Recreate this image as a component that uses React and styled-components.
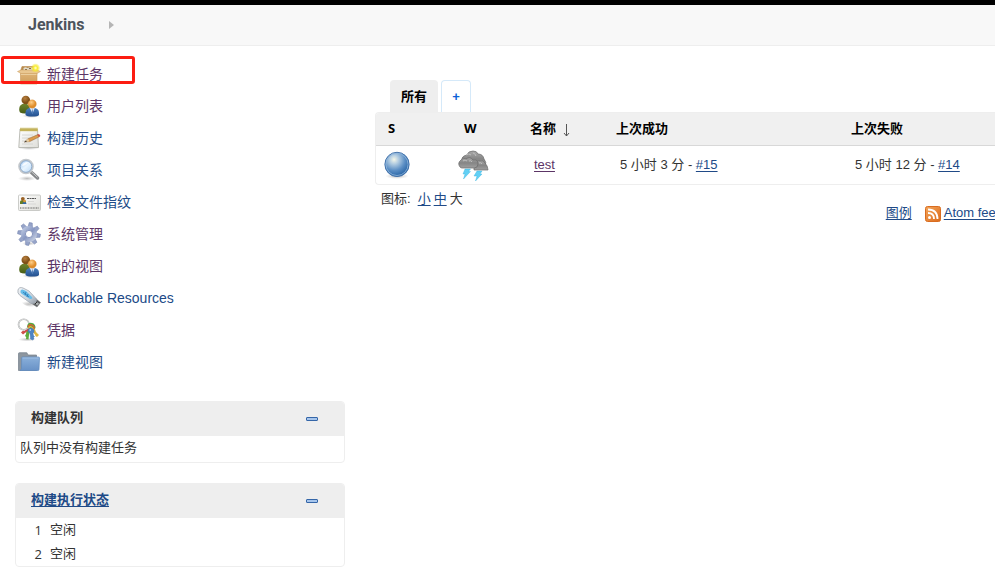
import React from "react";
import styled, { createGlobalStyle } from "styled-components";

const GlobalStyle = createGlobalStyle`
  *, *::before, *::after { box-sizing: border-box; }
  body {
    margin: 0;
    background: #fff;
    color: #333;
    font: 13px/20px "Liberation Sans", "Noto Sans CJK SC", sans-serif;
    overflow: hidden;
  }
`;

const TopBar = styled.header`
  display: flex;
  align-items: center;
  gap: 24px;
  height: 46px;
  padding: 0 28px;
  background: #f8f8f8;
  border-top: 5px solid #000;
  border-bottom: 1px solid #eee;
`;

const Brand = styled.a`
  color: #4d545d;
  font: 700 16px/20px Roboto, sans-serif;
  text-decoration: none;
`;

const Page = styled.div`
  display: grid;
  grid-template-columns: 330px minmax(630px, 1fr);
  column-gap: 30px;
  padding: 12px 0 0 15px;
`;

const TaskList = styled.ul`
  list-style: none;
  margin: 0;
  padding: 0;
`;

const Task = styled.li`
  position: relative;
  height: 32px;
  padding-left: 2px;
`;

const TaskLink = styled.a`
  display: flex;
  align-items: center;
  gap: 6px;
  height: 32px;
  width: max-content;
  color: ${(p) => (p.$visited ? "#5c3566" : "#204a87")};
  font-size: 14px;
  text-decoration: none;
`;

const Highlight = styled.span`
  position: absolute;
  top: -2px;
  left: -14px;
  width: 134px;
  height: 28px;
  border: 3px solid #fc1d12;
  border-radius: 3px;
  pointer-events: none;
`;

const Pane = styled.section`
  margin-top: ${(p) => (p.$first ? "23px" : "20px")};
  border: 1px solid #eee;
  border-radius: 4px;
  overflow: hidden;
`;

const PaneHead = styled.div`
  display: flex;
  align-items: center;
  justify-content: space-between;
  height: 34px;
  padding: 0 26px 2px 15px;
  background: #eee;
`;

const PaneTitle = styled.h2`
  margin: 0;
  font-size: 13px;
  line-height: 20px;
`;

const Link = styled.a`
  color: ${(p) => (p.$visited ? "#5c3566" : "#204a87")};
  text-underline-offset: 2px;
`;

const Collapse = styled.button`
  display: flex;
  width: 12px;
  height: 12px;
  padding: 0;
  border: 0;
  background: none;
  cursor: pointer;
`;

const PaneText = styled.p`
  margin: 0;
  padding: 2px 4px 4px;
`;

const ExecutorTable = styled.table`
  width: 100%;
  border-collapse: collapse;

  td { height: 24px; padding: 0; }
  td:first-child {
    width: 34px;
    padding-right: 8px;
    text-align: right;
    font-family: "Open Sans", sans-serif;
  }
`;

const Main = styled.main`
  padding-top: 22px;
`;

const Tabs = styled.nav`
  display: flex;
  gap: 3px;
  height: 32px;
  padding-left: 15px;
`;

const Tab = styled.a`
  display: flex;
  align-items: center;
  justify-content: center;
  min-width: ${(p) => (p.$active ? "48px" : "30px")};
  border: 1px solid ${(p) => (p.$active ? "#eee" : "#d5e9f9")};
  border-bottom: 0;
  border-radius: 4px 4px 0 0;
  background: ${(p) => (p.$active ? "#eee" : "#fff")};
  color: ${(p) => (p.$active ? "#000" : "#0b61d6")};
  font-weight: 700;
  text-decoration: none;
`;

const JobFrame = styled.div`
  border: 1px solid #eee;
  border-right: 0;
  border-radius: 4px 0 0 4px;
  overflow: hidden;
`;

const JobTable = styled.table`
  width: 100%;
  table-layout: fixed;
  border-collapse: collapse;

  th {
    height: 32px;
    padding: 0;
    background: #f0f0f0;
    border-bottom: 1px solid #d8d8d8;
    color: #000;
    text-align: left;
    white-space: nowrap;
  }
  th:first-child { padding-left: 12px; }
  td { height: 39px; padding: 0 0 0 4px; }
  td:first-child { padding-left: 7px; }
  td svg { display: block; }
  th:nth-child(2) { padding-left: 12px; }
  td:nth-child(2) { padding-left: 5px; }
`;

const Letter = styled.span`
  font: 700 13px/20px "Open Sans", sans-serif;
`;

const Col = styled.col`
  width: ${(p) => p.$w}px;
`;

const SortArrow = styled.svg`
  margin-left: 6px;
  vertical-align: -4px;
`;

const SizeRow = styled.div`
  display: flex;
  gap: 3px;
  padding: 4px 0 0 6px;
`;

const SizeLabel = styled.span`
  margin-right: 4px;
`;

const FeedRow = styled.div`
  display: flex;
  justify-content: flex-end;
  align-items: center;
  padding-right: 2px;
  margin-top: -6px;
  white-space: nowrap;
`;

const FeedLink = styled(Link)`
  margin-left: 3px;
`;

const FeedIcon = styled.svg`
  margin-left: 13px;
  margin-top: 2px;
`;

const Definitions = styled.svg`
  display: block;
`;

const Icon = ({ children, size = 24 }) => (
  <svg width={size} height={size} viewBox="0 0 24 24" aria-hidden="true">{children}</svg>
);

const Gradients = () => (
  <Definitions width="0" height="0" aria-hidden="true">
    <defs>
      <linearGradient id="card" x2="0" y2="1"><stop stopColor="#e0b579" /><stop offset="1" stopColor="#cd9d5b" /></linearGradient>
      <radialGradient id="glow"><stop stopColor="#fffde0" /><stop offset=".45" stopColor="#f9ee35" /><stop offset="1" stopColor="#f5e52a" stopOpacity=".15" /></radialGradient>
      <radialGradient id="brownHead" cx=".4" cy=".3"><stop stopColor="#b9803f" /><stop offset="1" stopColor="#805018" /></radialGradient>
      <radialGradient id="goldHead" cx=".4" cy=".3"><stop stopColor="#ffd08a" /><stop offset="1" stopColor="#e08e2c" /></radialGradient>
      <linearGradient id="blueBody" x2="0" y2="1"><stop stopColor="#4d82c0" /><stop offset="1" stopColor="#234f8e" /></linearGradient>
      <linearGradient id="greenBody" x2="0" y2="1"><stop stopColor="#70852f" /><stop offset="1" stopColor="#475d16" /></linearGradient>
      <linearGradient id="paper" x2="1" y2="1"><stop stopColor="#fff" /><stop offset="1" stopColor="#deded9" /></linearGradient>
      <linearGradient id="lens" x2="1" y2="1"><stop stopColor="#9cc7f5" /><stop offset=".5" stopColor="#e9f5ff" /><stop offset="1" stopColor="#b0d3f5" /></linearGradient>
      <linearGradient id="steel" x2="1" y2="1"><stop stopColor="#b9c5df" /><stop offset=".5" stopColor="#8797c2" /><stop offset="1" stopColor="#c5cee1" /></linearGradient>
      <linearGradient id="folder" x2="0" y2="1"><stop stopColor="#8bb0da" /><stop offset="1" stopColor="#6892c7" /></linearGradient>
      <linearGradient id="usb" x2="1" y2="1"><stop stopColor="#f5f7f9" /><stop offset=".6" stopColor="#cbd3dc" /><stop offset="1" stopColor="#949ca6" /></linearGradient>
      <radialGradient id="ball" cx=".38" cy=".3" r=".72"><stop stopColor="#f5f7e8" /><stop offset=".25" stopColor="#b5cee2" /><stop offset=".62" stopColor="#5c8fc5" /><stop offset="1" stopColor="#2461a3" /></radialGradient>
      <radialGradient id="shade"><stop stopColor="#777" stopOpacity=".5" /><stop offset="1" stopColor="#999" stopOpacity="0" /></radialGradient>
      <linearGradient id="cloud" x2="0" y2="1"><stop stopColor="#a9a9a9" /><stop offset=".5" stopColor="#858585" /><stop offset="1" stopColor="#a0a0a0" /></linearGradient>
      <linearGradient id="feed" x2="1" y2="1"><stop stopColor="#f3a65c" /><stop offset="1" stopColor="#dc6b1b" /></linearGradient>
    </defs>
  </Definitions>
);

const BoxIcon = () => (
  <Icon>
    <path d="M5 4.500h14L20 9H3.500z" fill="#b78a4d" stroke="#bd8b4d" strokeWidth=".6" />
    <path d="M6.500 6q2-1.500 4 0 3-1.500 6 0v3h-10z" fill="#e1dccb" />
    <path d="M8 7.500h2m2-1h2" stroke="#866a43" />
    <path d="M3.500 10h16.500v12H3.500z" fill="url(#card)" stroke="#c89755" strokeWidth=".6" />
    <path d="M.5 9.500L4 8h16l3.500 1.500L20 11.500H4z" fill="#e9c791" stroke="#ca9c60" strokeWidth=".5" />
    <path d="M4 12.500h15.500" stroke="#efd5a8" strokeWidth=".8" />
    <circle cx="18.500" cy="6" r="4.500" fill="url(#glow)" />
  </Icon>
);

const PeopleIcon = () => (
  <Icon>
    <ellipse cx="14" cy="22" rx="9" ry="2" fill="url(#shade)" />
    <path d="M2.200 15q0-5 5.500-5.500 5.300.5 5.300 6v3q-6 2-10 0-.8-.5-.8-3.500" fill="url(#greenBody)" />
    <circle cx="8.800" cy="6" r="4.300" fill="url(#brownHead)" />
    <path d="M8.500 18.500q0-4.500 6.500-5 7 .5 7 5v2.500q-1 1.500-6.500 1.500T8.500 21z" fill="url(#blueBody)" />
    <path d="M12.500 13.500l3 6 2.500-6z" fill="#dce8f7" />
    <path d="M15.200 14.500l-.6 4 .8 2 .8-2z" fill="#4d78b2" />
    <circle cx="15.200" cy="10" r="4.200" fill="url(#goldHead)" stroke="#d68b35" strokeWidth=".3" />
  </Icon>
);

const NotepadIcon = () => (
  <Icon>
    <ellipse cx="12" cy="22" rx="11" ry="2" fill="url(#shade)" />
    <path d="M3 3h17.500l1 18.500H1.800z" fill="url(#paper)" stroke="#acada6" strokeWidth=".8" />
    <path d="M3 2.500h17.500v2.500H3z" fill="#b6a34d" />
    <path d="M4 1.500v4m2-4v4m2-4v4m2-4v4m2-4v4m2-4v4m2-4v4m2-4v4m2-4v4" stroke="#d5c56a" strokeWidth=".9" />
    <path d="M5 9h11M5 12h8M5 15h3M5 18h11" stroke="#d0d0cc" strokeWidth=".8" />
    <path d="M7.500 16l3.500-3.200L21 8.500l1.500 2.200-10 5z" fill="#dc9b4c" stroke="#8e653a" strokeWidth=".5" />
    <path d="M7.500 16l3.500-3.200 1.500 2.800z" fill="#e5cfa6" /><path d="M7.200 16.200l1.800-1.700.8 1.200z" fill="#333" />
    <path d="M20.300 8.800l1.700-.8 1.500 2-1.700 1z" fill="#cc5148" />
  </Icon>
);

const SearchIcon = () => (
  <Icon>
    <ellipse cx="10" cy="20.500" rx="9" ry="2.500" fill="url(#shade)" />
    <path d="M14.500 14.500l6 5.500" stroke="#858789" strokeWidth="3.500" strokeLinecap="round" />
    <path d="M14.500 13.800l6 5.500" stroke="#c7c8c8" strokeWidth="1" />
    <circle cx="9" cy="8.500" r="6.800" fill="url(#lens)" stroke="#c4c8cc" strokeWidth="2" />
    <circle cx="9" cy="8.500" r="5.800" fill="none" stroke="#7499c4" strokeWidth=".7" />
    <path d="M5 8q1-4 6-4-1 3-6 4" fill="#fff" opacity=".8" />
  </Icon>
);

const BadgeIcon = () => (
  <Icon>
    <rect x="1.500" y="5" width="22" height="15.500" rx="1" fill="url(#paper)" stroke="#bfc0bc" strokeWidth=".8" />
    <path d="M3 12q0-2 3-2 3 0 3 2v2H3z" fill="#657e23" /><circle cx="5.800" cy="8.800" r="1.900" fill="#9a6226" />
    <path d="M5.500 14q0-2 2-2t2 2z" fill="#3269ac" /><circle cx="7.500" cy="11" r="1.300" fill="#dc9436" />
    <path d="M10 8.500h9" stroke="#555" strokeDasharray="2 .5" />
    <path d="M11 11.500h6M11 14h8" stroke="#d2d2d0" strokeWidth=".8" />
    <path d="M3 18h19" stroke="#8d8d8b" strokeWidth="1.500" strokeDasharray="1 .6" />
  </Icon>
);

const teeth = [0, 45, 90, 135, 180, 225, 270, 315];

const GearIcon = () => (
  <Icon>
    <ellipse cx="12" cy="21.500" rx="7" ry="2" fill="url(#shade)" />
    {teeth.map((angle) => (
      <path key={angle} d="M9.800 5L10.300.700h3L14.200 5z" transform={`rotate(${angle + 10} 12 12)`} fill="#96a4c9" stroke="#7988b2" strokeWidth=".6" />
    ))}
    <circle cx="12" cy="12" r="5.800" fill="none" stroke="url(#steel)" strokeWidth="4.500" />
    <circle cx="12" cy="12" r="3.600" fill="#fff" stroke="#6e7fae" strokeWidth=".8" />
  </Icon>
);

const UsbIcon = () => (
  <Icon>
    <path d="M3 15q9 9 18 5l-7-5z" fill="url(#shade)" />
    <path d="M14 17l4-5 5.500 4.500-3.500 4.500z" fill="#595c60" stroke="#777" strokeWidth=".5" />
    <path d="M17.500 14.500l4.500 3-1.500 2-4.500-3z" fill="#aaaead" /><path d="M19 16l1 .8m-2 .4l1 .8" stroke="#222" />
    <path d="M1 4Q2 .500 6 2l6 3 7.500 8q.5 3-3 4.500h-2.500L3 9.500Q0 7 1 4z" fill="url(#usb)" stroke="#a2aab3" strokeWidth=".8" />
    <path d="M3.500 5Q4 2 9 5l6 6q1 2-2 2L5 8q-2-1-1.500-3z" fill="#66bdea" />
    <path d="M6 6l6 5m-3-5l-1 3m3-1l-1 3" stroke="#276eab" strokeWidth=".7" />
  </Icon>
);

const KeysIcon = () => (
  <Icon>
    <ellipse cx="10" cy="21.500" rx="9" ry="2" fill="url(#shade)" />
    <path d="M9.500 12q2-2 4 0l-1.500 5-.5 4.500-2.500-.5.200-2-1.200-1 1-2z" fill="#5dab3c" />
    <path d="M10.500 9l2 2.500-6.500 5-2-2 2-2 1.500.5z" fill="#cf4e49" />
    <path d="M17 9l2 5 3 3-2 2-1.500-1-.5-1.500-4-4z" fill="#e0b744" />
    <circle cx="6.800" cy="6.500" r="5.300" fill="none" stroke="#acaeae" strokeWidth="1.600" />
    <circle cx="6.800" cy="6.500" r="5.300" fill="none" stroke="#f1f1f1" strokeWidth=".6" />
    <path d="M10 9q.5-5 5-4 3.500.8 3.500 5l-3 3z" fill="#52aa43" />
    <path d="M11 9q1-3 4-2 2.500 1 2 4" stroke="#e5582f" strokeWidth="1.300" fill="none" />
    <path d="M11.500 10.500q1-2.500 3-1.500 2 1 1.500 3" stroke="#f0b736" strokeWidth="1.200" fill="none" />
    <path d="M11.500 11q3-2.500 5.500 1 .5 3-1 3.500l.5 2 1 1-1 1 .5 1.500-1.500 1-2-1-.5-5.500q-3-2-1.500-4.500z" fill="#4e84c4" stroke="#396fae" strokeWidth=".4" />
    <circle cx="13.200" cy="12" r=".8" fill="#e8f2ff" />
  </Icon>
);

const FolderIcon = () => (
  <Icon>
    <path d="M1.500 3.500q0-.8 1-.8h7q.8 0 .8.800L11 5h8.500v15.500h-18z" fill="#8d969f" stroke="#737e89" strokeWidth=".7" />
    <path d="M5.500 7h16q1 0 1 1l-.5 11.500q0 1-1 1H3q1.300-.5 1.500-2L4.700 8q0-1 .8-1z" fill="url(#folder)" stroke="#5e8bc0" strokeWidth=".7" />
    <path d="M5.500 8h16" stroke="#b0cce9" strokeWidth=".6" />
  </Icon>
);

const BallIcon = () => (
  <Icon size={28}>
    <ellipse cx="12" cy="21.500" rx="10" ry="2.500" fill="url(#shade)" />
    <circle cx="12" cy="11.500" r="10.400" fill="url(#ball)" stroke="#3d6ea8" strokeWidth=".8" />
    <circle cx="12" cy="11.500" r="9.500" fill="none" stroke="#91b7dc" strokeWidth=".7" />
  </Icon>
);

const StormIcon = () => (
  <svg width="32" height="32" viewBox="0 0 32 32" role="img" aria-label="雷雨">
    <g fill="url(#cloud)" stroke="#6a6a6a" strokeWidth=".7">
      <path d="M5 12q-1-5 5-6 1-4 6-4 4 0 5 3 5 0 6 5 3 3 1 8H7z" />
      <path d="M17 20q-1-3 1-5 1-4 5-3 3-1 5 2 3 3 3 7H17z" />
      <path d="M3 18q-3-4 1-7 2-3 5-1 4-3 7 1 5-1 5 4 0 4-4 4H5q-1 0-2-1z" />
    </g>
    <path d="M9 6q3-2 5 0M16 4q2 0 3 3M6 12q2-2 4 0M12 12q2-1 3 1M22 14q2-1 3 1" fill="none" stroke="#bdbdbd" />
    <path d="M8 20h5.500l-2 2.500h2L6.500 30 8 25H6zM20 22h5l-2 3h2L18.500 32l1.500-5h-3z" fill="#62d0f5" stroke="#3bb3df" strokeWidth=".4" />
  </svg>
);

const CollapseIcon = () => (
  <svg width="12" height="12" viewBox="0 0 12 12" aria-hidden="true">
    <rect x=".5" y="5.500" width="11" height="3" rx=".5" fill="#a6c5ec" stroke="#3566a8" />
  </svg>
);

const tasks = [
  { label: "新建任务", Glyph: BoxIcon, visited: true, marked: true },
  { label: "用户列表", Glyph: PeopleIcon, visited: true },
  { label: "构建历史", Glyph: NotepadIcon },
  { label: "项目关系", Glyph: SearchIcon },
  { label: "检查文件指纹", Glyph: BadgeIcon },
  { label: "系统管理", Glyph: GearIcon, visited: true },
  { label: "我的视图", Glyph: PeopleIcon, visited: true },
  { label: "Lockable Resources", Glyph: UsbIcon },
  { label: "凭据", Glyph: KeysIcon, visited: true },
  { label: "新建视图", Glyph: FolderIcon },
];

export default function App() {
  return (
    <>
      <GlobalStyle />
      <Gradients />
      <TopBar>
        <Brand href="#">Jenkins</Brand>
        <svg width="5" height="8" viewBox="0 0 5 8" aria-hidden="true"><path d="M0 0l5 4-5 4z" fill="#b5b5b5" /></svg>
      </TopBar>
      <Page>
        <aside>
          <TaskList>
            {tasks.map(({ label, Glyph, visited, marked }) => (
              <Task key={label}>
                <TaskLink href="#" $visited={visited}><Glyph />{label}</TaskLink>
                {marked && <Highlight />}
              </Task>
            ))}
          </TaskList>
          <Pane $first>
            <PaneHead>
              <PaneTitle>构建队列</PaneTitle>
              <Collapse aria-label="折叠构建队列"><CollapseIcon /></Collapse>
            </PaneHead>
            <PaneText>队列中没有构建任务</PaneText>
          </Pane>
          <Pane>
            <PaneHead>
              <PaneTitle><Link href="#">构建执行状态</Link></PaneTitle>
              <Collapse aria-label="折叠构建执行状态"><CollapseIcon /></Collapse>
            </PaneHead>
            <ExecutorTable>
              <tbody>
                {[1, 2].map((n) => <tr key={n}><td>{n}</td><td>空闲</td></tr>)}
              </tbody>
            </ExecutorTable>
          </Pane>
        </aside>
        <Main>
          <Tabs>
            <Tab href="#" $active>所有</Tab>
            <Tab href="#">+</Tab>
          </Tabs>
          <JobFrame>
            <JobTable>
              <colgroup><Col $w={76} /><Col $w={78} /><Col $w={86} /><Col $w={235} /><col /></colgroup>
              <thead>
                <tr>
                  <th><Letter>S</Letter></th>
                  <th><Letter>W</Letter></th>
                  <th>
                    名称
                    <SortArrow width="9" height="13" viewBox="0 0 9 13" aria-hidden="true">
                      <path d="M4.500 0v12M2 9l2.500 3L7 9" fill="none" stroke="#555" />
                    </SortArrow>
                  </th>
                  <th>上次成功</th>
                  <th>上次失败</th>
                </tr>
              </thead>
              <tbody>
                <tr>
                  <td><BallIcon /></td>
                  <td><StormIcon /></td>
                  <td><Link href="#" $visited>test</Link></td>
                  <td>5 小时 3 分 - <Link href="#">#15</Link></td>
                  <td>5 小时 12 分 - <Link href="#">#14</Link></td>
                </tr>
              </tbody>
            </JobTable>
          </JobFrame>
          <SizeRow>
            <SizeLabel>图标:</SizeLabel>
            <Link href="#">小</Link>
            <Link href="#">中</Link>
            <span>大</span>
          </SizeRow>
          <FeedRow>
            <Link href="#">图例</Link>
            <FeedIcon width="16" height="16" viewBox="0 0 16 16" aria-hidden="true">
              <rect x=".5" y=".5" width="15" height="15" rx="2" fill="url(#feed)" stroke="#d96c20" />
              <circle cx="4.500" cy="11.500" r="1.500" fill="#fff" />
              <path d="M3 7q6 0 6 6M3 3.500q9.500 0 9.500 9.500" fill="none" stroke="#fff" strokeWidth="1.800" />
            </FeedIcon>
            <FeedLink href="#">Atom feed</FeedLink>
          </FeedRow>
        </Main>
      </Page>
    </>
  );
}
